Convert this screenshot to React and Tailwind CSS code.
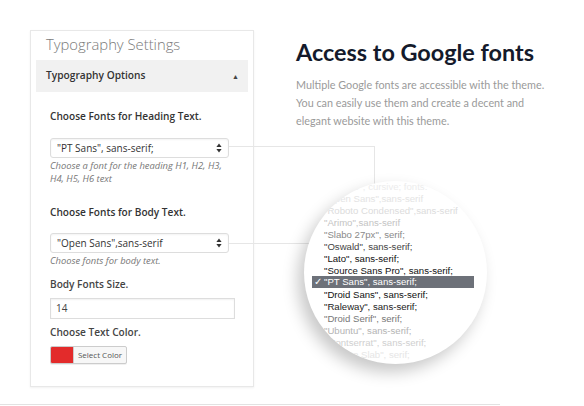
import React from "react";

const listItems = [
  { t: '"Lobster", cursive; fonts:', c: "#ececec", y: 187 },
  { t: '"Open Sans",sans-serif', c: "#e4e4e4", y: 199 },
  { t: '"Roboto Condensed",sans-serif', c: "#dcdcdc", y: 211 },
  { t: '"Arimo",sans-serif', c: "#c4c4c4", y: 223 },
  { t: '"Slabo 27px", serif;', c: "#8a8a8a", y: 235 },
  { t: '"Oswald", sans-serif;', c: "#444", y: 247 },
  { t: '"Lato", sans-serif;', c: "#111", y: 259 },
  { t: '"Source Sans Pro", sans-serif;', c: "#111", y: 271 },
  { t: '"Droid Sans", sans-serif;', c: "#111", y: 295 },
  { t: '"Raleway", sans-serif;', c: "#222", y: 307 },
  { t: '"Droid Serif", serif;', c: "#777", y: 319 },
  { t: '"Ubuntu", sans-serif;', c: "#b4b4b4", y: 331 },
  { t: '"Montserrat", sans-serif;', c: "#d0d0d0", y: 343 },
  { t: '"Roboto Slab", serif;', c: "#e6e6e6", y: 355 },
];

function Arrows() {
  return (
    <svg width="6" height="10" viewBox="0 0 6 10" className="shrink-0">
      <path d="M3 0.5 L5.6 4 L0.4 4 Z" fill="#333" />
      <path d="M3 9.5 L5.6 6 L0.4 6 Z" fill="#333" />
    </svg>
  );
}

export default function App() {
  const sans = { fontFamily: '"Open Sans", "Noto Sans", sans-serif' };
  const lato = { fontFamily: 'Lato, "Open Sans", sans-serif' };
  return (
    <div className="relative w-[584px] h-[406px] bg-white overflow-hidden" style={sans}>
      <div className="flex">
        {/* Left panel */}
        <div className="ml-[30px] mt-[30px] w-[224px] h-[357px] border border-[#e8e8e8] shadow-[0_1px_2px_rgba(0,0,0,0.06)] bg-white px-[5px]">
          <div className="h-[29px] flex items-center pl-[10px] pb-[3px] text-[14.8px] font-light text-[#7a7a7a] leading-none">
            Typography Settings
          </div>
          <div className="h-[32px] bg-[#f1f1f1] flex items-center justify-between pl-[10px] pr-[9px]">
            <span className="text-[10.2px] font-semibold text-[#333]">Typography Options</span>
            <span className="text-[7px] text-[#444] leading-none">▲</span>
          </div>
          <div className="pl-[14px]">
            <div className="mt-[18px] h-[14px] flex items-center text-[10.1px] font-semibold text-[#333]">
              Choose Fonts for Heading Text.
            </div>
            <div className="mt-[14px] w-[179px] h-[20px] border border-[#ddd] rounded-[3px] bg-white shadow-[inset_0_1px_2px_rgba(0,0,0,0.05)] flex items-center justify-between pl-[6px] pr-[6px]">
              <span className="text-[10px] text-[#333]">"PT Sans", sans-serif;</span>
              <Arrows />
            </div>
            <div className="mt-[1px] text-[9.4px] italic text-[#777] leading-[13px] w-[178px]">
              Choose a font for the heading H1, H2, H3, H4, H5, H6 text
            </div>
            <div className="mt-[21px] h-[14px] flex items-center text-[10.1px] font-semibold text-[#333]">
              Choose Fonts for Body Text.
            </div>
            <div className="mt-[13px] w-[179px] h-[20px] border border-[#ddd] rounded-[3px] bg-white shadow-[inset_0_1px_2px_rgba(0,0,0,0.05)] flex items-center justify-between pl-[6px] pr-[6px]">
              <span className="text-[10px] text-[#333]">"Open Sans",sans-serif</span>
              <Arrows />
            </div>
            <div className="mt-[1px] text-[9.4px] italic text-[#777] leading-[13px]">
              Choose fonts for body text.
            </div>
            <div className="mt-[11px] h-[14px] flex items-center text-[10.1px] font-semibold text-[#444]">
              Body Fonts Size.
            </div>
            <div className="mt-[6px] w-[185px] h-[21px] border border-[#ddd] bg-white shadow-[inset_0_1px_2px_rgba(0,0,0,0.06)] flex items-center pl-[5px] text-[10px] text-[#444]">
              14
            </div>
            <div className="mt-[7px] h-[14px] flex items-center text-[10.1px] font-semibold text-[#444]">
              Choose Text Color.
            </div>
            <div className="mt-[6px] w-[77px] h-[18px] border border-[#ccc] rounded-[2px] bg-[#f7f7f7] flex items-stretch overflow-hidden shadow-[0_1px_0_rgba(0,0,0,0.06)]">
              <div className="w-[22px] bg-[#e32b2b]" />
              <div className="flex-1 flex items-center justify-center text-[8px] text-[#555] border-l border-[#ccc]">
                Select Color
              </div>
            </div>
          </div>
        </div>

        {/* Right text */}
        <div className="ml-[42px] mt-[37px]">
          <h1 className="text-[23.4px] font-bold text-[#141a2b] leading-[30px]" style={lato}>
            Access to Google fonts
          </h1>
          <p className="mt-[9px] text-[10.8px] leading-[18px] text-[#9a9a9a] whitespace-nowrap" style={lato}>
            Multiple Google fonts are accessible with the theme.
            <br />
            You can easily use them and create a decent and
            <br />
            elegant website with this theme.
          </p>
        </div>
      </div>

      {/* connector lines */}
      <div className="absolute left-[229px] top-[146px] w-[146px] h-px bg-[#e6e6e6]" />
      <div className="absolute left-[374px] top-[146px] w-px h-[50px] bg-[#e6e6e6]" />
      <div className="absolute left-[229px] top-[243px] w-[90px] h-px bg-[#e6e6e6]" />

      {/* bottom rule */}
      <div className="absolute left-0 top-[404px] w-[500px] h-px bg-[#e2e2e2]" />

      {/* magnifier circle */}
      <div className="absolute left-[304px] top-[181px] w-[183px] h-[183px] rounded-full bg-white overflow-hidden shadow-[-6px_8px_16px_rgba(0,0,0,0.22)]">
        <div className="relative w-full h-full" style={{ fontFamily: '"Liberation Sans", Arial, sans-serif' }}>
          {listItems.map((it) => (
            <div
              key={it.t}
              className="absolute left-[20px] text-[9.6px] leading-[12px] whitespace-nowrap"
              style={{ top: it.y - 181 - 6, color: it.c }}
            >
              {it.t}
            </div>
          ))}
          <div className="absolute left-[8px] top-[95px] w-[162px] h-[12px] bg-[#6d7179] flex items-center text-[9.6px] leading-[12px] text-white whitespace-nowrap">
            <span className="w-[12px] pl-[2px]">✓</span>
            <span>"PT Sans", sans-serif;</span>
          </div>
        </div>
      </div>
    </div>
  );
}
